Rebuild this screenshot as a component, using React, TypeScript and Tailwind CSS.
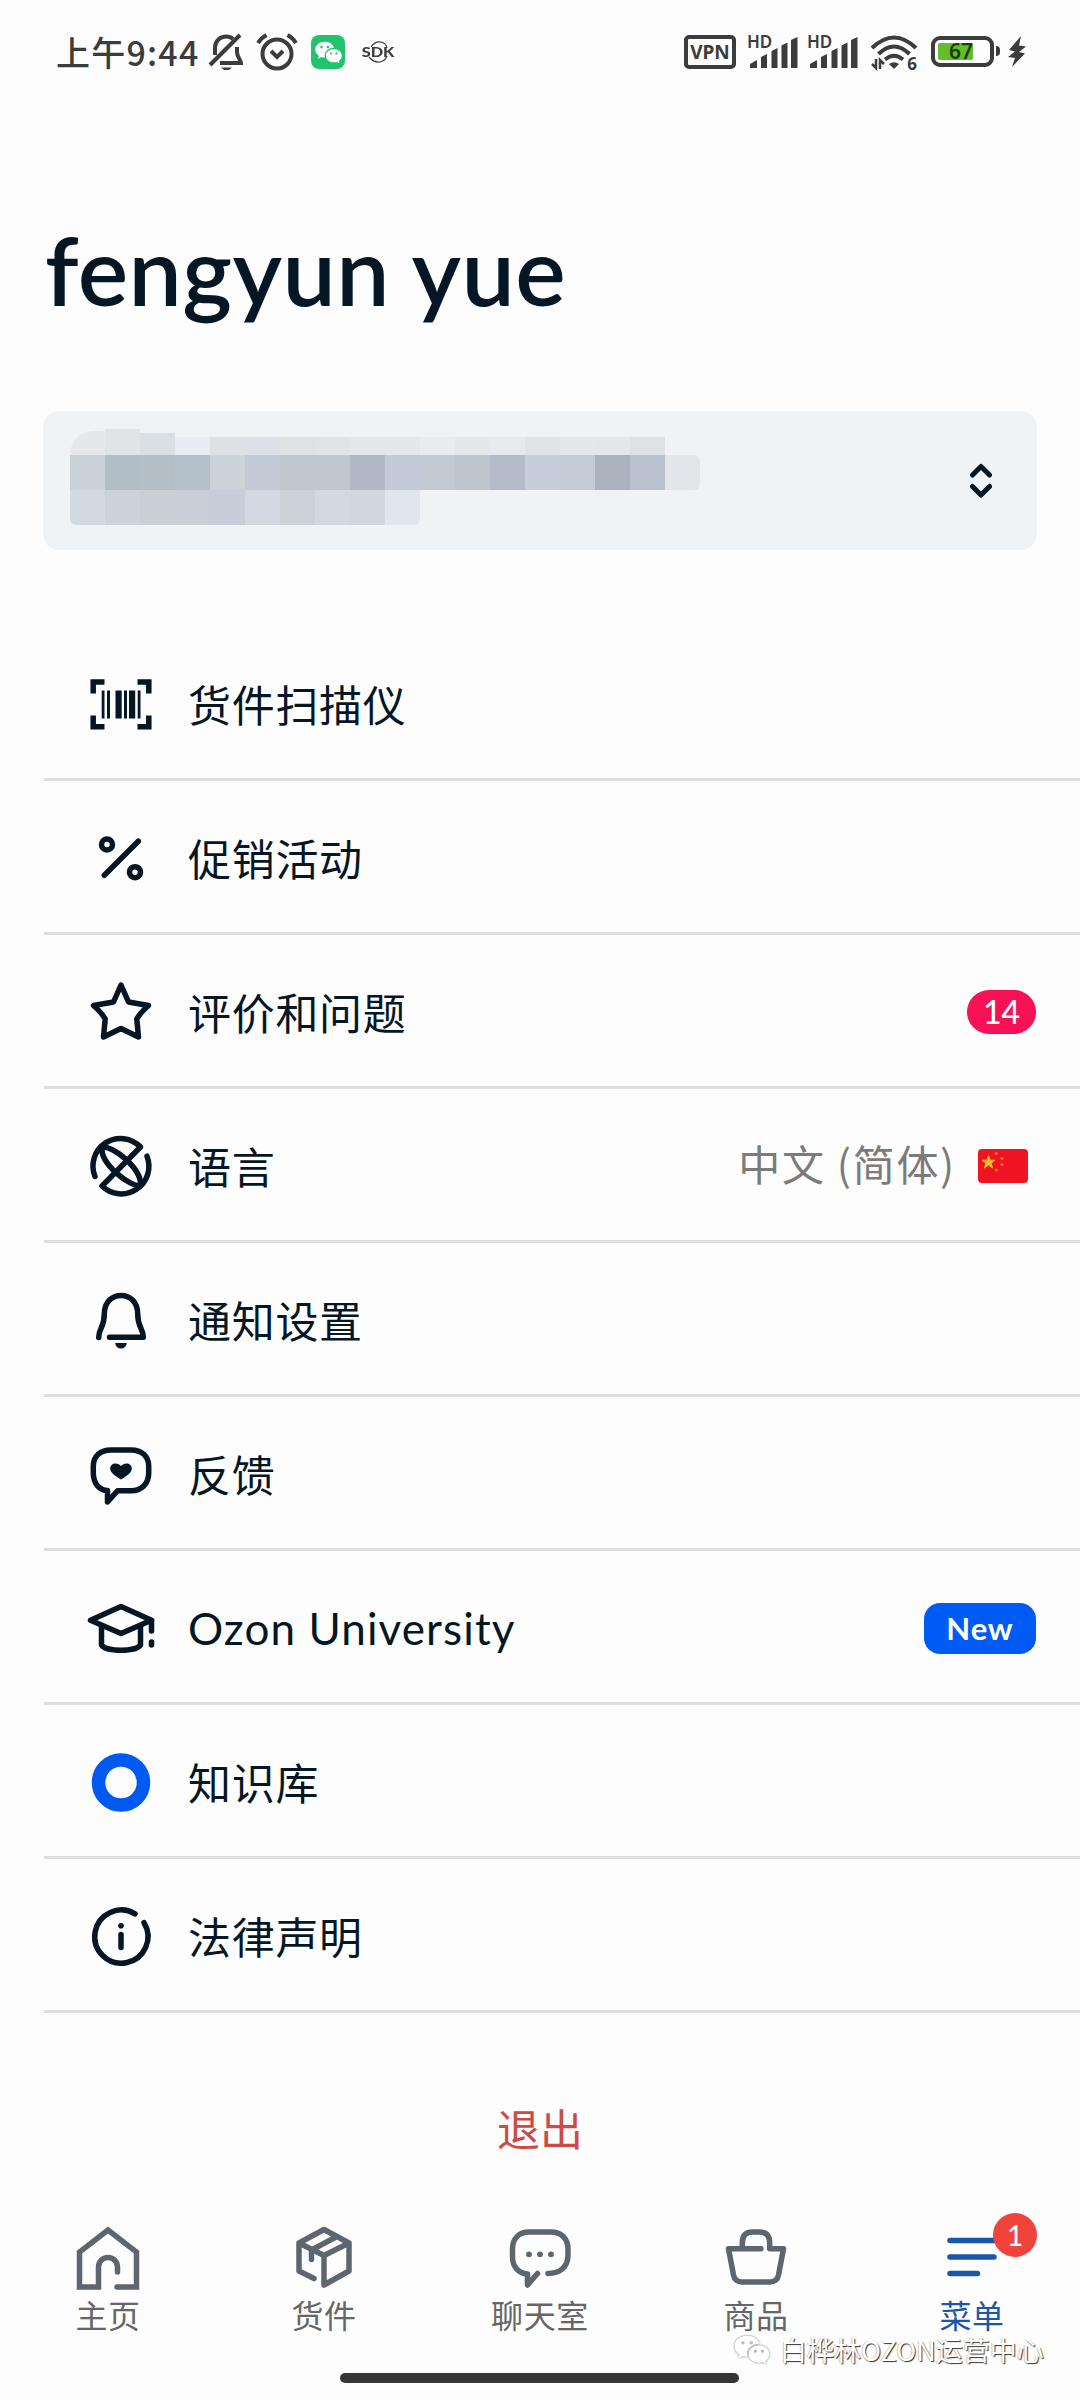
import type { ReactNode } from "react";
import { RiWechatFill } from "react-icons/ri";

const CJK = "font-['Noto_Sans_CJK_SC','Noto_Sans',sans-serif]";
const LATIN = "font-['Lato','Noto_Sans_CJK_SC',sans-serif]";

interface IconProps {
  children: ReactNode;
  viewBox?: string;
}

/* 66px glyph with its origin in the middle */
const Icon = ({ children, viewBox = "-33 -34 66 66" }: IconProps) => (
  <svg
    className="w-[66px] h-[66px] shrink-0 overflow-visible"
    viewBox={viewBox}
    fill="none"
    stroke="currentColor"
    strokeWidth="5.5"
    strokeLinecap="round"
    strokeLinejoin="round"
  >
    {children}
  </svg>
);

const ScannerIcon = () => (
  <Icon>
    <path
      d="M-27.8 -10.5V-22H-16.5M16.5 -22H27.8V-10.5M27.8 11.5V22.8H16.5M-16.5 22.8H-27.8V11.5"
      strokeLinecap="butt"
      strokeLinejoin="miter"
    />
    <g fill="currentColor" stroke="none">
      <rect x="-19.3" y="-13.5" width="2.8" height="28" />
      <rect x="-14" y="-13.5" width="3" height="28" />
      <rect x="-5.5" y="-13.5" width="6.2" height="28" />
      <rect x="3" y="-13.5" width="3" height="28" />
      <rect x="8" y="-13.5" width="6.2" height="28" />
      <rect x="16.7" y="-13.5" width="2.8" height="28" />
    </g>
  </Icon>
);

const PercentIcon = () => (
  <Icon>
    <circle cx="-14" cy="-13.5" r="5.5" />
    <circle cx="14" cy="14.2" r="5.5" />
    <path d="M17.3 -16.8L-16.7 17.3" />
  </Icon>
);

const StarIcon = () => (
  <Icon>
    <path d="M0 -27L7.5 -10L27.5 -6.5Q19 1 15.8 7L17.5 25L0 16.5L-17.5 25L-15.8 7Q-19 1 -27.5 -6.5L-7.5 -10Z" />
  </Icon>
);

const GlobeIcon = () => (
  <Icon>
    <path d="M-26 10.5A27.6 27.6 0 0 1 19.5 -19L-19 20A27.6 27.6 0 0 0 26 -9.8" />
    <path d="M-19 -18.5C-8 -21 21 3 19.5 19.500C8 21 -21 -3 -19 -18.5Z" />
  </Icon>
);

const BellIcon = () => (
  <Icon>
    <path d="M-22.3 17.5C-22.3 8 -16.7 8 -16.7 -6C-16.7 -18 -9 -24.5 0 -24.5C9 -24.5 16.7 -18 16.7 -6C16.7 8 22.3 8 22.3 17.3H-11.5" />
    <path d="M-5.8 23H5.8A5.8 5.5 0 0 1 -5.8 23Z" fill="currentColor" stroke="none" />
  </Icon>
);

const FeedbackIcon = () => (
  <Icon>
    <path d="M-13.5 16.5V28L-3.5 16.7H10C20.5 16.7 27.7 10 27.7 -1V-8C27.7 -18 20.5 -24 10 -24H-10C-20.5 -24 -27.7 -18 -27.7 -8V-1C-27.7 10 -21 16.5 -13.5 16.5Z" />
    <path
      d="M0 5.5C-6 2 -10.8 -1.5 -10.8 -5.5C-10.8 -11.5 -3 -12 0 -8C3 -12 10.8 -11.5 10.8 -5.5C10.8 -1.5 6 2 0 5.5Z"
      fill="currentColor"
      stroke="none"
    />
  </Icon>
);

const UniversityIcon = () => (
  <Icon>
    <path d="M0 -21.5L30.5 -7.8L0 5.5L-30.5 -7.8Z" />
    <path d="M-19.5 -1V17C-15 24 15 24 19.5 17V-1" />
    <path d="M30.5 -7.5V3M30.5 14V17" />
  </Icon>
);

const KnowledgeIcon = () => (
  <Icon>
    <circle cx="0" cy="0.5" r="22.5" stroke="#005af2" strokeWidth="13.5" />
  </Icon>
);

const InfoIcon = () => (
  <Icon>
    <path d="M14 -22.2A26.6 26.6 0 1 0 23 -13.3" />
    <path d="M0 -1.5V11.5" />
    <circle cx="0" cy="-10.3" r="2.8" fill="currentColor" stroke="none" />
  </Icon>
);

interface MenuRow {
  label: string;
  icon: ReactNode;
  latin?: boolean;
  extra?: ReactNode;
}

const ChinaFlag = () => (
  <svg className="ml-[22px] mr-[8px] mt-[2px] h-[34px] w-[50px]" viewBox="0 0 50 34">
    <rect width="50" height="34" rx="4" fill="#ee1422" />
    <path
      d="M10.5 6.5L12.2 11.2H17L13.1 14.1L14.6 19L10.5 16.1L6.4 19L7.9 14.1L4 11.2H8.8Z"
      fill="#ffb52c"
      stroke="#ffb52c"
    />
    <g fill="#f06a1e">
      <circle cx="18.3" cy="4.5" r="1.5" />
      <circle cx="24" cy="9.5" r="1.5" />
      <circle cx="24" cy="15.5" r="1.5" />
      <circle cx="18.3" cy="21" r="1.5" />
    </g>
  </svg>
);

const menuRows: MenuRow[] = [
  { label: "货件扫描仪", icon: <ScannerIcon /> },
  { label: "促销活动", icon: <PercentIcon /> },
  {
    label: "评价和问题",
    icon: <StarIcon />,
    extra: (
      <span className={`${LATIN} mt-[2px] flex h-11 w-[69px] items-center justify-center rounded-full bg-[#f91155] text-[32px] font-medium text-white`}>
        14
      </span>
    ),
  },
  {
    label: "语言",
    icon: <GlobeIcon />,
    extra: (
      <>
        <span className="-mt-[4px] text-[42px] tracking-[1.7px] text-[#7b7b7b]">中文 (简体)</span>
        <ChinaFlag />
      </>
    ),
  },
  { label: "通知设置", icon: <BellIcon /> },
  { label: "反馈", icon: <FeedbackIcon /> },
  {
    label: "Ozon University",
    icon: <UniversityIcon />,
    latin: true,
    extra: (
      <span className={`${LATIN} mt-[3px] flex h-[51px] w-28 items-center justify-center rounded-2xl bg-[#005bf5] text-[31px] font-bold tracking-[0.9px] text-white`}>
        New
      </span>
    ),
  },
  { label: "知识库", icon: <KnowledgeIcon /> },
  { label: "法律声明", icon: <InfoIcon /> },
];

const SignalBars = () => (
  <div className="relative h-[34px] w-[50px] text-[#3c3c3c]">
    <span className="absolute left-[-3px] top-0 font-['Noto_Sans',sans-serif] text-[17px] font-semibold leading-[14px]">HD</span>
    <svg className="h-[34px] w-[50px]" viewBox="0 0 50 34" fill="currentColor">
      <path d="M0 33V29L7 25V33ZM11 33V22L17 19V33ZM21.5 33V16L27.5 13V33ZM31.5 33V10.5L37.5 7.5V33ZM41 33V5L47.5 2V33Z" />
    </svg>
  </div>
);

const StatusBar = () => (
  <header className={`${CJK} flex h-[104px] shrink-0 items-start justify-between pl-[56px] pr-[54px] pt-[34px] text-[#3c3c3c]`}>
    <div className="flex h-9 items-center">
      <span className="w-[152px] whitespace-nowrap text-[34px] font-medium leading-9 tracking-[1.2px]">上午9:44</span>
      <svg className="h-[38px] w-9" viewBox="0 0 36 38" fill="none" stroke="currentColor" strokeWidth="4">
        <path d="M7 22V15C7 8 12 3.5 18 3.5C21 3.5 23.5 4.5 25 6M29 14V19C29 24 33 27 33 30H12" />
        <path d="M32 2L2 32" />
        <path d="M13 34.5H24L21 37H16Z" fill="currentColor" stroke="none" />
      </svg>
      <svg className="ml-[12px] h-[38px] w-[42px]" viewBox="0 0 42 38" fill="none" stroke="currentColor" strokeWidth="4">
        <circle cx="21" cy="21" r="14.5" />
        <path d="M2 10Q5 5 10.5 2M40 10Q37 5 31.5 2" />
        <path d="M15 18L21 24L27 18" />
      </svg>
      <span className="ml-[13px] flex h-[34px] w-[34px] items-center justify-center rounded-lg bg-[#20c46c] text-white">
        <RiWechatFill size={29} />
      </span>
      <span className="relative ml-[18px] flex h-6 w-[30px] items-center justify-center">
        <svg className="absolute inset-0 h-6 w-[30px]" viewBox="0 0 30 24" fill="none" stroke="currentColor" strokeWidth="1.2">
          <path d="M8 7Q12 1 18 2Q23 3 24 8M6 17Q11 23 17 22Q22 21 24 16" />
        </svg>
        <span className="relative scale-x-125 font-['Lato',sans-serif] text-[13px] font-black leading-none">SDK</span>
      </span>
    </div>

    <div className="flex h-9 items-start">
      <span className="mt-[1px] flex h-[34px] w-[52px] items-center justify-center rounded-[5px] border-4 border-[#3c3c3c] font-['Noto_Sans',sans-serif] text-[19px] font-bold">
        VPN
      </span>
      <div className="ml-[14px] mt-[1px]">
        <SignalBars />
      </div>
      <div className="ml-[10px] mt-[1px]">
        <SignalBars />
      </div>
      <div className="relative ml-[10px] mt-[1px] h-[36px] w-[48px]">
        <svg className="h-[36px] w-[48px]" viewBox="0 0 48 36" fill="none" stroke="currentColor" strokeWidth="4">
          <path d="M2 13Q24 -8 46 13M8.5 19Q24 4 39.5 19M15 24.5Q24 17 33 24.5" />
          <path d="M24 34L19 29Q24 25.5 29 29Z" fill="currentColor" stroke="none" />
          <path d="M6 24V33L2 29M10 34V25L14 29" strokeWidth="2.5" />
        </svg>
        <span className="absolute bottom-0 right-[1px] font-['Noto_Sans',sans-serif] text-[17px] font-bold leading-[14px]">6</span>
      </div>
      <div className="ml-[13px] mt-[2px] flex h-[31px] w-[63px] items-center rounded-[9px] border-4 border-[#3c3c3c] pl-[3px]">
        <span className="h-[17px] w-[35px] rounded-[2px] bg-[#63bd2f] pl-[11px] font-['Noto_Sans',sans-serif] text-[21px] font-semibold leading-[17px] text-[#173d0a]">
          67
        </span>
      </div>
      <span className="ml-[2px] mt-3 h-[10px] w-1 rounded-r-sm bg-[#3c3c3c]" />
      <svg className="ml-[8px] mt-[2px] h-[32px] w-[18px]" viewBox="0 0 18 32" fill="currentColor">
        <path d="M13 0L1 14L7 15.5L0 21L7 22L4 31L17 17.5L11 16L18 10.5L11 9.5Z" />
      </svg>
    </div>
  </header>
);

/* Pixelated shop name: one colour per 35px cell */
const mosaicTop = ["#e8edf3", "#dde1e5", "#dce1e7", "#dee2e5", "#e1e4e7", "#e4e6ea", "#e4e8ec", "#e8ebef", "#e5e8eb", "#e6e9ed", "#e0e3e7", "#e5e8eb", "#e4e7ea", "#dfe2e5"];
const mosaicMiddle = ["#c9d1d6", "#b1bec6", "#b4bec6", "#b4c1ca", "#ccd4d9", "#c2cad6", "#bfc7cf", "#bfc7cf", "#b1b8c6", "#c3cad7", "#c3cad4", "#bec6cd", "#b4bbc9", "#c6cedc", "#c4ccd6", "#abb3bf", "#bac2cf"];
const mosaicBottom = ["#d2d9e1", "#ccd3da", "#c9d0d5", "#c9cfd9", "#c8ced9", "#d1d8e2", "#cbd2d8", "#d2d9e1", "#d1d7de"];

const Cells = ({ colors, height }: { colors: string[]; height: string }) => (
  <>
    {colors.map((color, i) => (
      <span key={i} className={`w-[35px] ${height}`} style={{ backgroundColor: color }} />
    ))}
  </>
);

const ShopSelect = () => (
  <div className="mx-[43px] mt-[77px] flex h-[139px] shrink-0 items-start justify-between rounded-2xl bg-[#eff3f6] pl-[27px] pr-[45px]">
    <div className="mt-[18px] flex flex-col">
      <div className="flex items-end">
        <span className="h-6 w-[35px] rounded-tl-[28px] bg-[#e4e8eb]" />
        <span className="h-[26px] w-[35px] bg-[#e0e4e7]" />
        <span className="h-[22px] w-[35px] bg-[#dadfe3]" />
        <Cells colors={mosaicTop} height="h-[18px]" />
      </div>
      <div className="flex">
        <Cells colors={mosaicMiddle} height="h-[35px]" />
        <span className="h-[35px] w-[35px] rounded-r-md bg-[#e2e6ea]" />
      </div>
      <div className="flex overflow-hidden rounded-bl-md">
        <Cells colors={mosaicBottom} height="h-[35px]" />
        <span className="h-[35px] w-[35px] rounded-br-md bg-[#e1e5ee]" />
      </div>
    </div>
    <svg className="mt-[52px] h-9 w-[22px]" viewBox="0 0 22 36" fill="none" stroke="currentColor" strokeWidth="5" strokeLinecap="round" strokeLinejoin="round">
      <path d="M2.5 12L11 3.5L19.5 12M2.5 23.5L11 32L19.5 23.5" />
    </svg>
  </div>
);

const navItems = [
  {
    label: "主页",
    icon: (
      <path
        d="M9.5 14V9A9.5 9.5 0 0 0 -9.5 9V29H-28.5V-6L0 -28L28.5 -6V29H9"
        strokeLinejoin="miter"
      />
    ),
  },
  {
    label: "货件",
    icon: <path d="M-10 20.5L-25 13V-15L0 -28.5L25 -15V13L0 27V-2.5L-25 -15M0 -2.5L25 -15M13 -21.5L-12.5 -8V1.5" />,
  },
  {
    label: "聊天室",
    icon: (
      <>
        <path d="M-2.5 15.5L-12.5 27V16C-21.5 15.5 -27.5 8.5 -27.5 -1V-9C-27.5 -19.5 -21 -26 -11 -26H11C21 -26 28 -19.5 28 -9V-3C28 9 20 15.5 8 15.5" />
        <g fill="currentColor" stroke="none">
          <circle cx="-11" cy="-3.7" r="2.9" />
          <circle cx="0" cy="-3.7" r="2.9" />
          <circle cx="11" cy="-3.7" r="2.9" />
        </g>
      </>
    ),
  },
  {
    label: "商品",
    icon: <path d="M5 -9.3H-27.5L-22.5 17Q-21 24 -14 24H14Q21 24 22.5 17L27.5 -9.3H13.7V-15Q13.7 -26 3.5 -26H-3.5Q-13.7 -26 -13.7 -15V-9.3" />,
  },
  {
    label: "菜单",
    active: true,
    icon: <path d="M-22 -17.5H24M-22 -1H22M-22 15.5H5.5" />,
  },
];

const BottomNav = () => (
  <nav className="relative grid h-[175px] shrink-0 grid-cols-5">
    {navItems.map((item) => (
      <div
        key={item.label}
        className={`relative flex flex-col items-center ${item.active ? "text-[#1b57a8]" : "text-[#5d666e]"}`}
      >
        <Icon viewBox="-33 -33 66 66">{item.icon}</Icon>
        <span className={`${CJK} mt-[6px] text-[32px] leading-[34px] tracking-[0.6px] ${item.active ? "" : "text-[#666666]"}`}>
          {item.label}
        </span>
        {item.active && (
          <span className={`${LATIN} absolute left-[129px] top-[-12px] flex h-11 w-11 items-center justify-center rounded-full bg-[#f0443b] text-[28px] font-medium text-white`}>
            1
          </span>
        )}
      </div>
    ))}
    {/* Account watermark */}
    <div className="absolute left-[727px] top-[106px] flex items-center whitespace-nowrap text-white">
      <RiWechatFill className="h-[38px] w-[50px] drop-shadow-[0_0_1px_#777777]" />
      <span className={`${CJK} ml-[3px] text-[27px] leading-[28px] [text-shadow:1px_1px_1px_#333333,-1px_0_0_#cccccc]`}>
        白桦林OZON运营中心
      </span>
    </div>
    <span className="absolute left-[340px] top-[148px] h-[10px] w-[399px] rounded-full bg-[#363636]" />
  </nav>
);

const App = () => {
  return (
    <div className="flex h-[2400px] w-[1080px] flex-col overflow-hidden bg-[#fdfdfd] text-[#051624]">
      <StatusBar />

      <h1 className={`${LATIN} mt-[100px] h-[130px] shrink-0 whitespace-nowrap pl-[45px] text-[95px] font-semibold leading-[130px] tracking-[0.4px]`}>
        fengyun yue
      </h1>

      <ShopSelect />

      <ul className={`${CJK} ml-11 mt-[77px] shrink-0`}>
        {menuRows.map((row) => (
          <li key={row.label} className="flex h-[154px] items-center border-b-[3px] border-[#dedede] pl-11 pr-11">
            {row.icon}
            <span
              className={`ml-[34px] flex-1 whitespace-nowrap ${
                row.latin
                  ? "mt-[3px] font-['Lato',sans-serif] text-[44px] tracking-[1.1px]"
                  : "mt-[1px] text-[43px] tracking-[0.7px]"
              }`}
            >
              {row.label}
            </span>
            {row.extra}
          </li>
        ))}
      </ul>

      <button className={`${CJK} mt-[81px] h-[66px] shrink-0 text-[43px] leading-[66px] text-[#cf4a44]`}>退出</button>

      <div className="h-[65px] shrink-0" />
      <BottomNav />
    </div>
  );
};

export default App;
